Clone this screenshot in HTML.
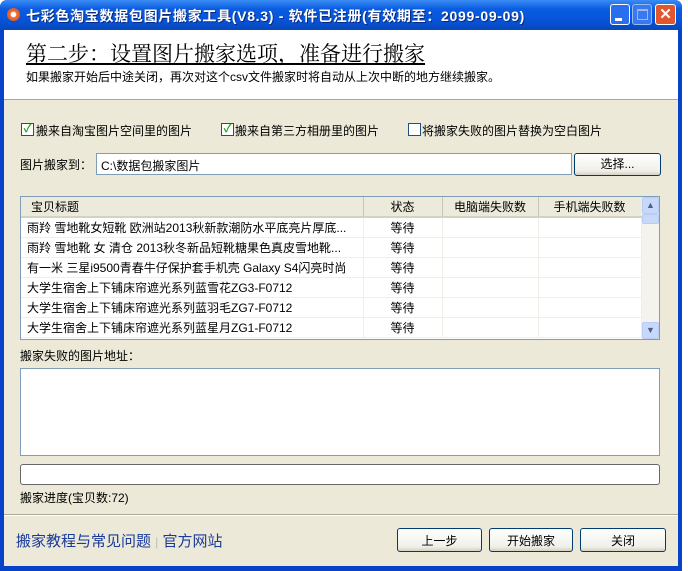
<!DOCTYPE html>
<html><head><meta charset="utf-8"><style>
*{margin:0;padding:0;box-sizing:border-box}
body{width:688px;height:571px;background:#fff;position:relative;overflow:hidden;font-family:"Liberation Sans","Noto Sans CJK SC","WenQuanYi Zen Hei",sans-serif;font-size:12px;color:#000}
.a{position:absolute}
.win{left:0;top:0;width:682px;height:571px;background:#0842c8;border-radius:7px 7px 0 0}
.tb{left:0;top:0;width:682px;height:30px;border-radius:7px 7px 0 0;background:linear-gradient(#3b8cf4,#0a5ce0 30%,#0653d8 70%,#0847b8)}
.body{left:4px;top:30px;width:674px;height:536px;background:#ece9d8}
.cb{width:13px;height:13px;border:1px solid #1c5180;background:#fff;font-size:11px;line-height:11px;color:#21a121;text-align:center;font-weight:bold}
.btn{border:1px solid #003c74;border-radius:3px;background:linear-gradient(#fff,#f0f0ea 80%,#d6d0c5);text-align:center;line-height:24px;font-size:12px}
.tbl td{height:20px;border-bottom:1px solid #efefe8;border-right:1px solid #efefe8;padding-left:6px;white-space:nowrap;overflow:hidden}
</style></head><body>
<div class="a win"></div>
<div class="a tb"></div>
<div class="a" style="left:7px;top:8px;width:13px;height:13px;border-radius:50%;background:radial-gradient(circle,#fff 25%,#f07030 35%,#e04010)"></div>
<div class="a" style="left:26px;top:6px;color:#fff;font-weight:bold;font-size:14px;letter-spacing:0.7px;text-shadow:1px 1px #0a2a80">七彩色淘宝数据包图片搬家工具(V8.3) - 软件已注册(有效期至：2099-09-09)</div>
<div class="a" style="left:610px;top:4px;width:20px;height:21px;border:1px solid #fff;border-radius:3px;background:#2a6ef0"><div class="a" style="left:4px;top:13px;width:7px;height:3px;background:#fff"></div></div>
<div class="a" style="left:632px;top:4px;width:20px;height:21px;border:1px solid #9ab8f0;border-radius:3px;background:#3a78f0"><div class="a" style="left:4px;top:4px;width:11px;height:11px;border:1px solid #9ab8f0;border-top-width:2px"></div></div>
<div class="a" style="left:655px;top:4px;width:21px;height:21px;border:1px solid #fff;border-radius:3px;background:#e0572e;color:#fff;font-weight:bold;font-size:15px;text-align:center;line-height:19px">✕</div>
<div class="a body"></div>
<div class="a" style="left:4px;top:30px;width:674px;height:70px;background:#fff;border-bottom:1px solid #aca899"></div>
<div class="a" style="left:26px;top:38px;font-size:21px;text-decoration:underline;font-family:'Liberation Serif','Noto Serif CJK SC',serif">第二步：设置图片搬家选项，准备进行搬家</div>
<div class="a" style="left:26px;top:68px;font-size:12px">如果搬家开始后中途关闭，再次对这个csv文件搬家时将自动从上次中断的地方继续搬家。</div>

<div class="a cb" style="left:21px;top:123px">✓</div><div class="a" style="left:36px;top:122px">搬来自淘宝图片空间里的图片</div>
<div class="a cb" style="left:221px;top:123px">✓</div><div class="a" style="left:235px;top:122px">搬来自第三方相册里的图片</div>
<div class="a cb" style="left:408px;top:123px"></div><div class="a" style="left:422px;top:122px">将搬家失败的图片替换为空白图片</div>

<div class="a" style="left:20px;top:156px">图片搬家到：</div>
<div class="a" style="left:96px;top:153px;width:476px;height:22px;border:1px solid #7f9db9;background:#fff;padding:3px 4px">C:\数据包搬家图片</div>
<div class="a btn" style="left:574px;top:153px;width:87px;height:23px;line-height:21px">选择...</div>

<div class="a" style="left:20px;top:196px;width:640px;height:144px;border:1px solid #7f9db9;background:#fff;overflow:hidden">
<table class="tbl" style="border-collapse:collapse;width:620px;table-layout:fixed">
<tr style="background:#ebeadb"><td style="width:342px;height:20px;border-bottom:2px solid #d6d2c2;border-right:1px solid #c8c5b5;padding-left:10px">宝贝标题</td><td style="width:79px;text-align:center;padding:0;border-bottom:2px solid #d6d2c2;border-right:1px solid #c8c5b5">状态</td><td style="width:96px;text-align:center;padding:0;border-bottom:2px solid #d6d2c2;border-right:1px solid #c8c5b5">电脑端失败数</td><td style="width:103px;text-align:center;padding:0;border-bottom:2px solid #d6d2c2">手机端失败数</td></tr>
<tr><td>雨羚 雪地靴女短靴 欧洲站2013秋新款潮防水平底亮片厚底...</td><td style="text-align:center;padding:0">等待</td><td></td><td></td></tr>
<tr><td>雨羚 雪地靴 女 清仓 2013秋冬新品短靴糖果色真皮雪地靴...</td><td style="text-align:center;padding:0">等待</td><td></td><td></td></tr>
<tr><td>有一米 三星i9500青春牛仔保护套手机壳 Galaxy S4闪亮时尚</td><td style="text-align:center;padding:0">等待</td><td></td><td></td></tr>
<tr><td>大学生宿舍上下铺床帘遮光系列蓝雪花ZG3-F0712</td><td style="text-align:center;padding:0">等待</td><td></td><td></td></tr>
<tr><td>大学生宿舍上下铺床帘遮光系列蓝羽毛ZG7-F0712</td><td style="text-align:center;padding:0">等待</td><td></td><td></td></tr>
<tr><td>大学生宿舍上下铺床帘遮光系列蓝星月ZG1-F0712</td><td style="text-align:center;padding:0">等待</td><td></td><td></td></tr>
</table>
<div class="a" style="left:621px;top:0;width:17px;height:142px;background:#f4f3ee"></div>
<div class="a" style="left:621px;top:0;width:17px;height:17px;border:1px solid #b8cdf5;border-radius:2px;background:#c8d8fa;color:#4d6185;font-size:9px;text-align:center;line-height:15px">▲</div>
<div class="a" style="left:621px;top:17px;width:17px;height:10px;border:1px solid #b8cdf5;border-radius:2px;background:#c8d8fa"></div>
<div class="a" style="left:621px;top:125px;width:17px;height:17px;border:1px solid #b8cdf5;border-radius:2px;background:#c8d8fa;color:#4d6185;font-size:9px;text-align:center;line-height:15px">▼</div>
</div>

<div class="a" style="left:20px;top:347px">搬家失败的图片地址：</div>
<div class="a" style="left:20px;top:368px;width:640px;height:88px;border:1px solid #7f9db9;background:#fff"></div>
<div class="a" style="left:20px;top:464px;width:640px;height:21px;border:1px solid #686868;border-radius:3px;background:#fff"></div>
<div class="a" style="left:20px;top:489px">搬家进度(宝贝数:72)</div>
<div class="a" style="left:4px;top:514px;width:674px;height:1px;background:#aca899"></div>
<div class="a" style="left:4px;top:515px;width:674px;height:1px;background:#fff"></div>
<div class="a" style="left:16px;top:530px;font-size:15px;color:#1a3a9a">搬家教程与常见问题 <span style="color:#bbb;font-size:12px">|</span> 官方网站</div>
<div class="a btn" style="left:397px;top:528px;width:85px;height:24px">上一步</div>
<div class="a btn" style="left:489px;top:528px;width:84px;height:24px">开始搬家</div>
<div class="a btn" style="left:580px;top:528px;width:86px;height:24px">关闭</div>
<div class="a" style="left:0;top:566px;width:682px;height:5px;background:#0842c8"></div>
</body></html>
